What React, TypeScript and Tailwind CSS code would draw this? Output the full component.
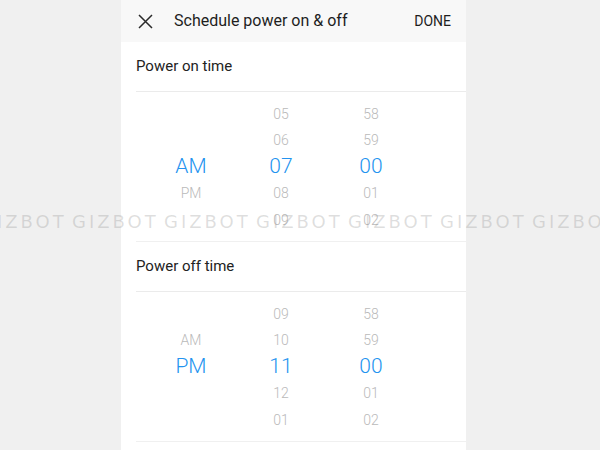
import React from "react";

const BLUE = "text-[#2393ef]";

type Row = { text: string; on?: boolean };

const PickerColumn = ({ rows }: { rows: (Row | null)[] }) => (
  <div className="flex w-[90px] flex-col items-center">
    {rows.map((r, i) => (
      <div key={i} className="flex h-[26.5px] items-center justify-center leading-none">
        {r && (
          <span
            className={
              r.on
                ? `text-[21px] font-light ${BLUE}`
                : "text-[14px] font-light text-[#bababa]"
            }
          >
            {r.text}
          </span>
        )}
      </div>
    ))}
  </div>
);

const TimeSection = ({
  label,
  ampm,
  hours,
  minutes,
}: {
  label: string;
  ampm: (Row | null)[];
  hours: Row[];
  minutes: Row[];
}) => (
  <>
    {/* SECTION LABEL */}
    <div className="ml-[15px] flex h-[50px] items-center border-b border-[#ebebeb] text-[15px] text-[#222]">
      {label}
    </div>
    {/* WHEEL */}
    <div className="ml-[15px] flex h-[150px] items-center border-b border-[#f0f0f0] pl-[10px]">
      <PickerColumn rows={ampm} />
      <PickerColumn rows={hours} />
      <PickerColumn rows={minutes} />
    </div>
  </>
);

const mins: Row[] = [
  { text: "58" },
  { text: "59" },
  { text: "00", on: true },
  { text: "01" },
  { text: "02" },
];

export default function App() {
  return (
    <div
      className="relative h-[450px] w-[600px] overflow-hidden bg-[#f0f0f0] pl-[121px]"
      style={{ fontFamily: "Roboto, 'Liberation Sans', sans-serif" }}
    >
      <div className="h-full w-[345px] bg-white">
        {/* HEADER */}
        <div className="flex h-[42px] items-center bg-[#f8f8f8] pl-[17px] pr-[15px]">
          <svg width="15" height="15" viewBox="0 0 15 15" className="shrink-0">
            <path d="M1 1 L14 14 M14 1 L1 14" stroke="#2a2a2a" strokeWidth="1.5" fill="none" />
          </svg>
          <div className="ml-[21px] text-[16px] text-[#1e1e1e]">Schedule power on &amp; off</div>
          <div className="ml-auto text-[14px] text-[#1e1e1e]">DONE</div>
        </div>

        <TimeSection
          label="Power on time"
          ampm={[null, null, { text: "AM", on: true }, { text: "PM" }, null]}
          hours={[{ text: "05" }, { text: "06" }, { text: "07", on: true }, { text: "08" }, { text: "09" }]}
          minutes={mins}
        />
        <TimeSection
          label="Power off time"
          ampm={[null, { text: "AM" }, { text: "PM", on: true }, null, null]}
          hours={[{ text: "09" }, { text: "10" }, { text: "11", on: true }, { text: "12" }, { text: "01" }]}
          minutes={mins}
        />
      </div>

      {/* WATERMARK */}
      <div
        className="pointer-events-none absolute left-[-20px] top-[208px] flex whitespace-nowrap text-[18px] tracking-[3px] text-[rgba(140,140,140,0.28)]"
        style={{ fontFamily: "'DejaVu Sans', sans-serif" }}
      >
        {Array.from({ length: 7 }).map((_, i) => (
          <span key={i} className="inline-block w-[92px] shrink-0">
            GIZBOT
          </span>
        ))}
      </div>
    </div>
  );
}
